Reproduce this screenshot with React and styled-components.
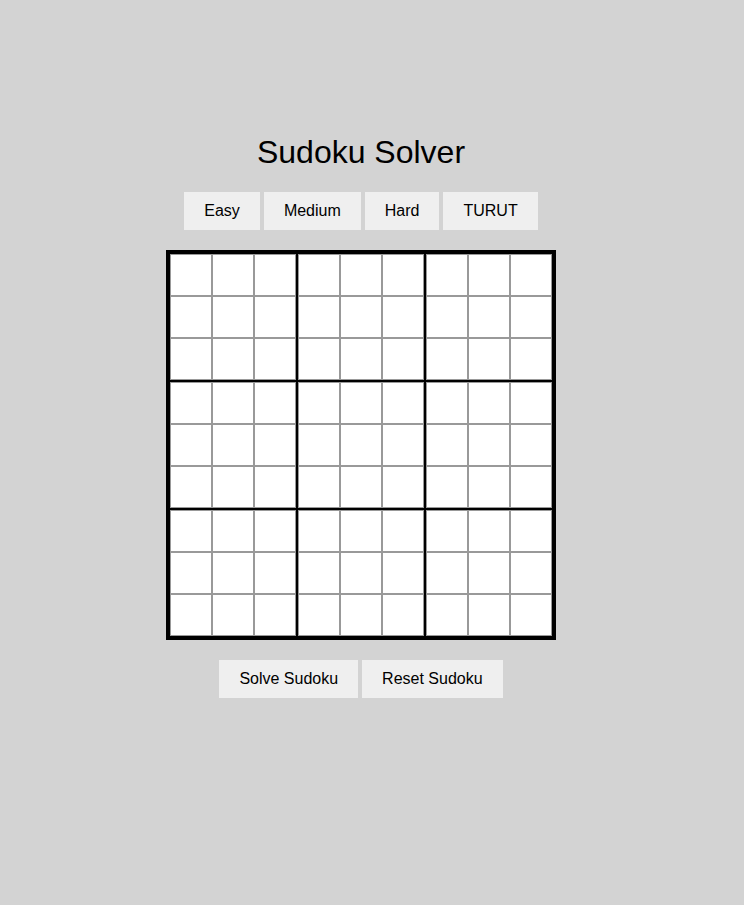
import styled, { createGlobalStyle } from "styled-components";

const Global = createGlobalStyle`
  body {
    margin: 0;
    background: #d3d3d3;
    font-family: "Liberation Sans", Arial, sans-serif;
  }
`

const LEVELS = ["Easy", "Medium", "Hard", "TURUT"];

const App = () => {
  return (
    <Page>
      <Global />
      <Title>Sudoku Solver</Title>
      <ButtonRow>
        {LEVELS.map((level) => (
          <Button key={level}>{level}</Button>
        ))}
      </ButtonRow>
      <Board>
        {Array.from({ length: 9 }).map((_, b) => (
          <Box key={b}>
            {Array.from({ length: 9 }).map((_, c) => (
              <Cell key={c} />
            ))}
          </Box>
        ))}
      </Board>
      <ButtonRow $bottom>
        <Button>Solve Sudoku</Button>
        <Button>Reset Sudoku</Button>
      </ButtonRow>
    </Page>
  )
}

const Page = styled.div`
  min-height: 100vh;
  box-sizing: border-box;
  display: flex;
  flex-direction: column;
  align-items: center;
  padding: 113px 22px 0 0;
  background: #d3d3d3;
`

const Title = styled.h1`
  margin: 21.44px 0 20.5px;
  font-size: 32px;
  font-weight: normal;
  color: #000;
`

const ButtonRow = styled.div`
  display: flex;
  gap: 4px;
  margin-top: ${(p) => (p.$bottom ? "20px" : "0")};
  margin-bottom: ${(p) => (p.$bottom ? "0" : "20px")};
`

const Button = styled.button`
  border: none;
  background: #efefef;
  color: #000;
  padding: 10px 20px;
  font-family: "Liberation Sans", Arial, sans-serif;
  font-size: 16px;
  line-height: normal;
  cursor: pointer;
`

const Board = styled.div`
  display: grid;
  grid-template-columns: repeat(3, 126px);
  grid-template-rows: repeat(3, 126px);
  gap: 2px;
  background: #000;
  border: 4px solid #000;
`

const Box = styled.div`
  display: grid;
  grid-template-columns: repeat(3, 42px);
  grid-template-rows: repeat(3, 42px);
`

const Cell = styled.div`
  box-sizing: border-box;
  background: #fff;
  border: 1px solid #999;
`

export default App;
